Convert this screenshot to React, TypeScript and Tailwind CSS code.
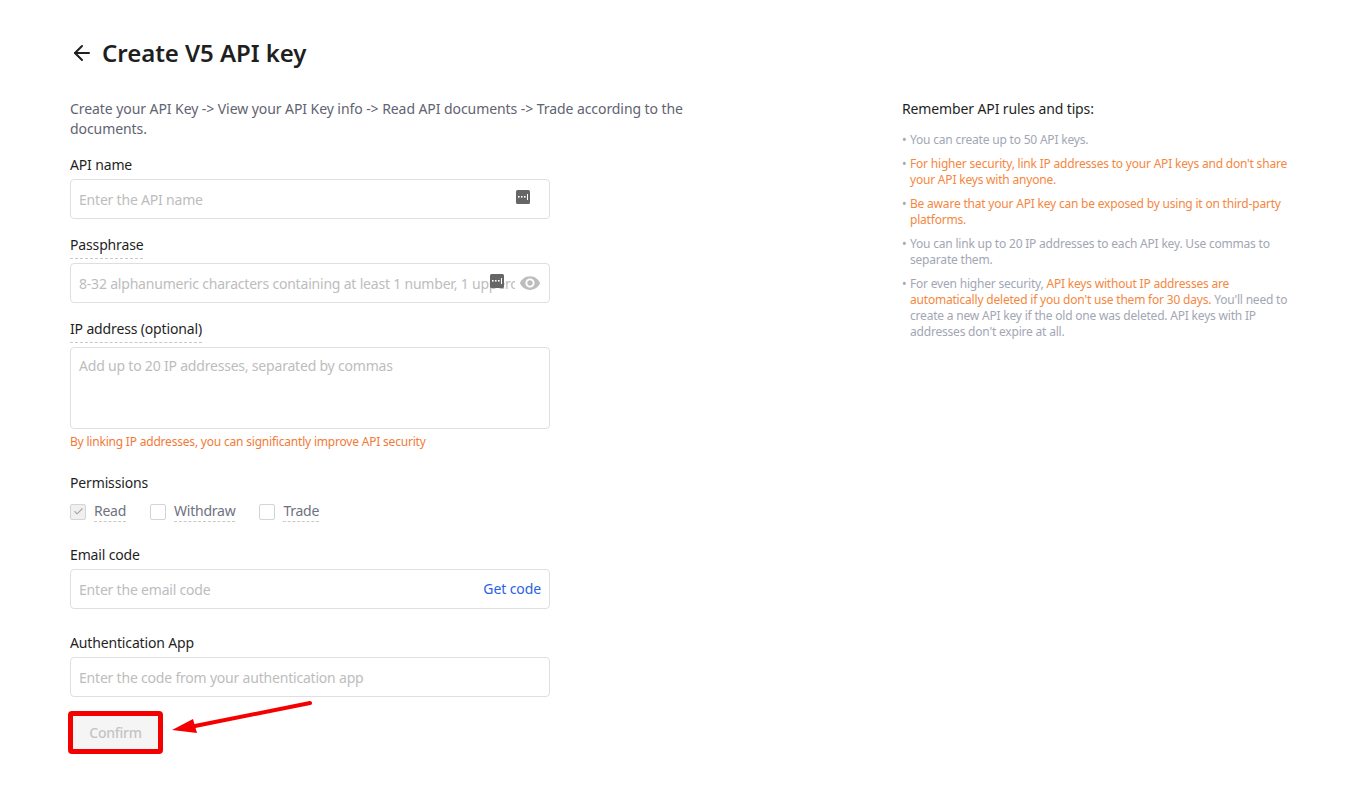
import { ArrowLeft, Check } from 'lucide-react'

// password manager badge that the browser puts over the inputs
function KeyBadge({ className = '' }: { className?: string }) {
  return (
    <svg className={className} width="14" height="14" viewBox="0 0 14 14">
      <rect width="14" height="14" rx="1.5" fill="#666666" />
      <rect x="2" y="6" width="1.6" height="1.6" fill="#fff" />
      <rect x="5" y="6" width="1.6" height="1.6" fill="#fff" />
      <rect x="8" y="6" width="1.6" height="1.6" fill="#fff" />
      <rect x="11" y="4" width="1" height="6" fill="#fff" />
    </svg>
  )
}

function EyeIcon({ className = '' }: { className?: string }) {
  return (
    <svg className={className} width="22" height="22" viewBox="0 0 24 24" fill="#bdbdbd">
      <path d="M12 4.5C7 4.5 2.73 7.61 1 12c1.73 4.39 6 7.5 11 7.5s9.27-3.11 11-7.5c-1.73-4.39-6-7.5-11-7.5zM12 17c-2.76 0-5-2.24-5-5s2.24-5 5-5 5 2.24 5 5-2.24 5-5 5zm0-8c-1.66 0-3 1.34-3 3s1.34 3 3 3 3-1.34 3-3-1.34-3-3-3z" />
    </svg>
  )
}

function Label({ children, dashed = false }: { children: React.ReactNode; dashed?: boolean }) {
  return (
    <div className="h-5 leading-5 text-sm tracking-[-0.15px] text-[#1f1f1f]">
      <span className={dashed ? 'inline-block h-[24px] border-b border-dashed border-[#c8c8c8]' : ''}>{children}</span>
    </div>
  )
}

function Box({ placeholder, children }: { placeholder: string; children?: React.ReactNode }) {
  return (
    <div className="h-10 w-[480px] flex items-center rounded border border-[#dfdfdf] bg-white pl-2 pr-2 relative">
      <input
        placeholder={placeholder}
        className="flex-1 min-w-0 bg-transparent pt-[2px] text-sm tracking-[-0.2px] outline-none placeholder:text-[#bdbdbd]"
      />
      {children}
    </div>
  )
}

function Perm({ label, checked = false }: { label: string; checked?: boolean }) {
  return (
    <div className="flex items-center gap-2">
      <span className={`w-4 h-4 rounded-[2px] border border-[#d4d4d4] flex items-center justify-center ${checked ? 'bg-[#f0f0f0]' : 'bg-white'}`}>
        {checked && <Check size={11} strokeWidth={2.5} color="#a8a8a8" />}
      </span>
      <span className="text-sm leading-5 tracking-[-0.25px] text-[#6f7280] border-b border-dashed border-[#c8c8c8]">{label}</span>
    </div>
  )
}

export default function App() {
  return (
    <div className="relative w-[1349px] h-[794px] overflow-hidden bg-white font-['Noto_Sans','Inter',sans-serif] flex">
      <div className="w-[832px] pl-[70px] pt-[37px] shrink-0">
        <div className="flex items-center gap-2 h-8">
          <ArrowLeft size={24} strokeWidth={2} color="#1f1f1f" />
          <h1 className="text-2xl font-semibold tracking-[-0.05px] text-[#1f1f1f]">Create V5 API key</h1>
        </div>

        <p className="mt-[30px] w-[640px] text-sm leading-5 tracking-[-0.07px] text-[#5f6372]">
          Create your API Key -&gt; View your API Key info -&gt; Read API documents -&gt; Trade according to the documents.
        </p>

        <div className="mt-[16px]">
          <Label>API name</Label>
          <div className="mt-[4px]">
            <Box placeholder="Enter the API name">
              <KeyBadge className="absolute right-[19px] top-[10px]" />
            </Box>
          </div>
        </div>

        <div className="mt-[16px]">
          <Label dashed>Passphrase</Label>
          <div className="mt-[8px]">
            <Box placeholder="8-32 alphanumeric characters containing at least 1 number, 1 uppercase letter, and 1 special character">
              <span className="w-[26px]" />
              <KeyBadge className="absolute right-[45px] top-[10px]" />
              <EyeIcon className="absolute right-[8px] top-[8px]" />
            </Box>
          </div>
        </div>

        <div className="mt-[16px]">
          <Label dashed>IP address (optional)</Label>
          <textarea
            placeholder="Add up to 20 IP addresses, separated by commas"
            className="mt-[8px] block h-[82px] w-[480px] resize-none rounded border border-[#dfdfdf] px-2 py-2 text-sm tracking-[-0.2px] outline-none placeholder:text-[#bdbdbd]"
          />
          <p className="mt-[5px] text-xs leading-4 tracking-[-0.2px] text-[#f27a38]">By linking IP addresses, you can significantly improve API security</p>
        </div>

        <div className="mt-[23px]">
          <Label>Permissions</Label>
          <div className="mt-[8px] flex gap-6">
            <Perm label="Read" checked />
            <Perm label="Withdraw" />
            <Perm label="Trade" />
          </div>
        </div>

        <div className="mt-[23px]">
          <Label>Email code</Label>
          <div className="mt-[4px]">
            <Box placeholder="Enter the email code">
              <span className="text-sm tracking-[-0.1px] text-[#2b62e3]">Get code</span>
            </Box>
          </div>
        </div>

        <div className="mt-[24px]">
          <Label>Authentication App</Label>
          <div className="mt-[4px]">
            <Box placeholder="Enter the code from your authentication app" />
          </div>
        </div>

        <button className="mt-[19px] ml-[3px] h-[33px] w-[85px] bg-[#f5f5f5] text-sm font-medium tracking-[-0.25px] text-[#c4c4c4]">Confirm</button>
      </div>

      <div className="w-[395px] pt-[99px] ml-[70px]">
        <h2 className="text-sm leading-5 tracking-[-0.12px] text-[#1f1f1f]">Remember API rules and tips:</h2>
        <ul className="mt-[13px] flex flex-col gap-2 text-xs leading-4 tracking-[-0.2px] text-[#a3a6b4]">
          <li className="flex"><span className="w-2 shrink-0">•</span><span>You can create up to 50 API keys.</span></li>
          <li className="flex"><span className="w-2 shrink-0">•</span><span className="text-[#f5873f]">For higher security, link IP addresses to your API keys and don't share your API keys with anyone.</span></li>
          <li className="flex"><span className="w-2 shrink-0">•</span><span className="text-[#f5873f]">Be aware that your API key can be exposed by using it on third-party platforms.</span></li>
          <li className="flex"><span className="w-2 shrink-0">•</span><span>You can link up to 20 IP addresses to each API key. Use commas to separate them.</span></li>
          <li className="flex"><span className="w-2 shrink-0">•</span><span>For even higher security, <span className="text-[#f5873f]">API keys without IP addresses are automatically deleted if you don't use them for 30 days.</span> You'll need to create a new API key if the old one was deleted. API keys with IP addresses don't expire at all.</span></li>
        </ul>
      </div>

      {/* red annotation drawn on the screenshot */}
      <div className="absolute left-[68px] top-[711px] w-[95px] h-[43px] rounded-sm border-[5px] border-[#f50000]" />
      <svg className="absolute left-[170px] top-[698px]" width="145" height="40" viewBox="0 0 145 40">
        <path d="M140 5 L25 28" stroke="#f50000" strokeWidth="4" strokeLinecap="round" />
        <path d="M2 32 L23 21 L27 35 Z" fill="#f50000" />
      </svg>
    </div>
  )
}
